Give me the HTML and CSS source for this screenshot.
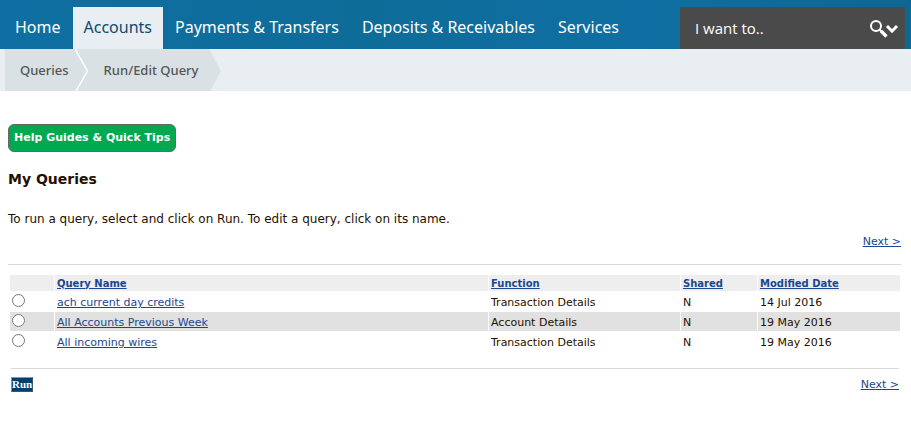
FILE: index.html
```html
<!DOCTYPE html>
<html lang="en">
    <head>
        <meta charset="utf-8">
        <title>My Queries</title>
        <link rel="stylesheet" href="styles.css">
    </head>
    <body>
        <header class="top-bar">
            <nav class="main-nav">
                <a href="#">Home</a>
                <a href="#" class="active">Accounts</a>
                <a href="#">Payments &amp; Transfers</a>
                <a href="#">Deposits &amp; Receivables</a>
                <a href="#">Services</a>
            </nav>
            <form class="search">
                <input type="text" class="search-input" placeholder="I want to.." aria-label="I want to">
                <button type="button" class="search-button" aria-label="Search">
                    <svg width="30" height="20" viewBox="0 0 30 20" fill="none" stroke="#fff">
                        <circle cx="7" cy="7" r="5" stroke-width="2"/>
                        <path d="M10.5 10.5L12.5 12.5" stroke-width="2"/>
                        <path d="M12 12L17.5 17.5" stroke-width="3.4"/>
                        <path d="M18 7L23 12.2L28 7" stroke-width="3"/>
                    </svg>
                </button>
            </form>
        </header>

        <nav class="breadcrumbs">
            <a href="#">Queries</a>
            <svg class="crumb-separator" width="14" height="42" viewBox="0 0 14 42">
                <path d="M0 0L12.5 22L1 42" fill="none" stroke="#fff" stroke-width="1.5"/>
            </svg>
            <a href="#">Run/Edit Query</a>
            <svg width="12" height="42" viewBox="0 0 12 42">
                <path d="M0 0L12 22L1 42H0Z" fill="#dae1e4"/>
            </svg>
        </nav>

        <main class="content">
            <button type="button" class="help-button">Help Guides &amp; Quick Tips</button>
            <h1>My Queries</h1>
            <p class="intro">To run a query, select and click on Run. To edit a query, click on its name.</p>
            <div class="pager"><a href="#">Next &gt;</a></div>

            <form class="query-form">
                <table class="query-table">
                    <colgroup>
                        <col class="col-select">
                        <col class="col-name">
                        <col class="col-function">
                        <col class="col-shared">
                        <col class="col-date">
                    </colgroup>
                    <thead>
                        <tr>
                            <th></th>
                            <th><a href="#">Query Name</a></th>
                            <th><a href="#">Function</a></th>
                            <th><a href="#">Shared</a></th>
                            <th><a href="#">Modified Date</a></th>
                        </tr>
                    </thead>
                    <tbody>
                        <tr>
                            <td><input type="radio" name="query" aria-labelledby="query-1"></td>
                            <td><a href="#" id="query-1">ach current day credits</a></td>
                            <td>Transaction Details</td>
                            <td>N</td>
                            <td>14 Jul 2016</td>
                        </tr>
                        <tr>
                            <td><input type="radio" name="query" aria-labelledby="query-2"></td>
                            <td><a href="#" id="query-2">All Accounts Previous Week</a></td>
                            <td>Account Details</td>
                            <td>N</td>
                            <td>19 May 2016</td>
                        </tr>
                        <tr>
                            <td><input type="radio" name="query" aria-labelledby="query-3"></td>
                            <td><a href="#" id="query-3">All incoming wires</a></td>
                            <td>Transaction Details</td>
                            <td>N</td>
                            <td>19 May 2016</td>
                        </tr>
                    </tbody>
                </table>
                <div class="table-footer">
                    <button type="button" class="run-button">Run</button>
                    <a href="#">Next &gt;</a>
                </div>
            </form>
        </main>
    </body>
</html>
```

FILE: styles.css
```css
body {
    margin: 0;
    background: #fff;
    color: #241000;
    font-family: Verdana, "DejaVu Sans", sans-serif;
    font-size: 11px;
}
a { color: #1b4790; }

/* top navigation */
.top-bar {
    display: flex;
    justify-content: space-between;
    padding: 7px 6px 0 4px;
    background: linear-gradient(90deg, #0f6fa2, #0e6c99 40%, #0f6fa2 70%, #0c6794);
}
.main-nav {
    display: flex;
    gap: 1px;
}
.main-nav a {
    padding: 0 11px;
    color: #fff;
    font: 16px/40px "Noto Sans", sans-serif;
    height: 42px;
    text-decoration: none;
    white-space: nowrap;
}
.main-nav a.active {
    background: #e8eef1;
    color: #0d4a70;
}
.search {
    display: flex;
    width: 225px;
    background: #4a4a4a;
}
.search-input {
    flex: 1;
    min-width: 0;
    padding: 0 0 0 15px;
    border: none;
    background: none;
    color: #fff;
    font: 15px "Open Sans", sans-serif;
}
.search-input::placeholder {
    color: #fff;
    opacity: 1;
}
.search-button {
    display: flex;
    align-items: center;
    padding: 2px 6px 0 0;
    border: none;
    background: none;
    cursor: pointer;
}

/* breadcrumbs */
.breadcrumbs {
    display: flex;
    padding-left: 5px;
    background: #e8eef1;
}
.breadcrumbs a {
    padding: 0 6px 0 15px;
    background: #dae1e4;
    color: #555;
    font: 500 13px/42px "Noto Sans", sans-serif;
    text-decoration: none;
}
.breadcrumbs svg + a { padding: 0 11px 0 15px; }
.crumb-separator { background: #dae1e4; }

/* page content */
.content { padding: 33px 10px 0 8px; }
.help-button {
    display: block;
    padding: 0 5px;
    border: 1px solid #666;
    border-radius: 6px;
    background: #00a94f;
    color: #fff;
    font: bold 11px/26px Verdana, "DejaVu Sans", sans-serif;
    cursor: pointer;
}
h1 {
    margin: 18px 0 0;
    font-size: 14px;
    line-height: 18px;
}
.intro {
    margin: 22px 0 0;
    font-size: 12px;
    line-height: 18px;
}
.pager {
    padding: 6px 0 14px;
    border-bottom: 1px solid #d8d8d8;
    line-height: 16px;
    text-align: right;
}
.query-form { padding: 9px 0 0 1px; }
.query-table {
    width: 100%;
    border-spacing: 1px;
    table-layout: fixed;
}
.col-select { width: 44px; }
.col-function { width: 191px; }
.col-shared { width: 76px; }
.col-date { width: 142px; }
.query-table th,
.query-table td {
    padding: 0 2px;
    text-align: left;
}
.query-table th {
    height: 16px;
    background: #eee;
    font-size: 10px;
}
.query-table td {
    height: 17px;
    padding-top: 2px;
}
.query-table td:first-child { vertical-align: top; }
.query-table tbody tr:nth-child(even) td { background: #e1e1e1; }
.query-table input {
    display: block;
    width: 13px;
    height: 13px;
    margin: 0;
}
.table-footer {
    display: flex;
    justify-content: space-between;
    align-items: center;
    margin: 16px 2px 0;
    padding-top: 8px;
    border-top: 1px solid #d8d8d8;
}
.run-button {
    padding: 0;
    border: 1px outset #6fa0b8;
    background: #003f6b;
    color: #fff;
    font: bold 11px/13px "Liberation Serif", serif;
    cursor: pointer;
}
```
